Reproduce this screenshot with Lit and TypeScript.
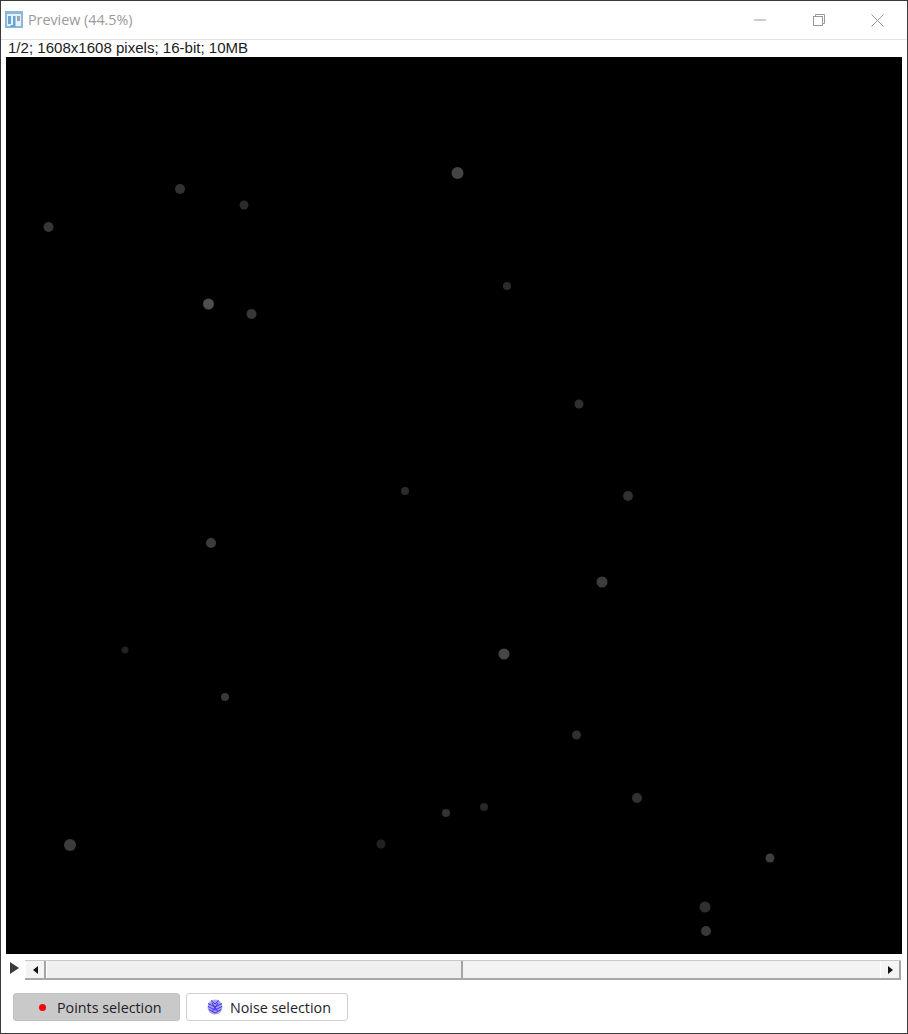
import { LitElement, html, css, svg } from "lit";
import { customElement } from "lit/decorators.js";

const DOTS: [number, number, number, string][] = [
  [457.5, 173, 6, "#444444"], [180, 189, 5, "#323232"], [244, 205, 4.5, "#2b2b2b"],
  [48.5, 227, 5, "#363636"], [507, 286, 4, "#2b2b2b"], [208.5, 304, 5.5, "#4e4e4e"],
  [251.5, 314, 5, "#383838"], [579, 404, 4.5, "#2f2f2f"], [405, 491, 4, "#2b2b2b"],
  [628, 496, 5, "#313131"], [211, 543, 5, "#3c3c3c"], [602, 582, 5.5, "#3c3c3c"],
  [125, 650, 3.5, "#222222"], [504, 654, 5.5, "#464646"], [225, 697, 4, "#383838"],
  [576.5, 735, 4.5, "#2f2f2f"], [637, 798, 5, "#313131"], [484, 807, 4, "#282828"],
  [446, 813, 4, "#333333"], [381, 844, 4.5, "#222222"], [70, 845, 6, "#3c3c3c"],
  [770, 858, 4.5, "#3e3e3e"], [705, 907, 5.5, "#2f2f2f"], [706, 931, 5, "#383838"],
];

@customElement("app-root")
export class AppRoot extends LitElement {
  static styles = css`
    :host {
      display: block;
      width: 908px;
      height: 1034px;
      box-sizing: border-box;
      background: #fff;
      border: 1px solid #3a3a3a;
      overflow: hidden;
      font-family: "Open Sans", "Noto Sans", sans-serif;
    }
    .titlebar {
      height: 38px;
      display: flex;
      align-items: center;
      border-bottom: 1px solid #e2e2e2;
      padding-left: 4px;
    }
    .app-icon { width: 18px; height: 18px; flex: none; }
    .title {
      margin: 0 0 2px 5px;
      font-size: 14.3px;
      color: #9a9a9a;
      flex: 1;
    }
    .win-btn {
      width: 59px;
      height: 38px;
      display: flex;
      align-items: center;
      justify-content: center;
      flex: none;
    }
    .win-btn svg { display: block; }
    .status {
      height: 17px;
      padding-left: 7px;
      font: 15.06px/15px "Liberation Sans", Arial, sans-serif;
      color: #1c1c1c;
      white-space: nowrap;
    }
    .canvas-wrap {
      margin-left: 5px;
      width: 896px;
      height: 897px;
      background: #000;
    }
    .canvas-wrap svg { display: block; }
    .scroll-row {
      margin-top: 6px;
      display: flex;
      align-items: flex-start;
      height: 21px;
    }
    .play {
      width: 24px;
      flex: none;
      display: flex;
      padding: 2px 0 0 9px;
      box-sizing: border-box;
    }
    .track {
      width: 876px;
      height: 20px;
      box-sizing: border-box;
      background: #f3f3f3;
      border-top: 1px solid #c8c8c8;
      border-bottom: 2px solid #a8a8a8;
      display: flex;
      flex: none;
    }
    .arrow {
      width: 21px;
      box-sizing: border-box;
      background: #f4f4f4;
      border-right: 2px solid #a4a4a4;
      border-left: 1px solid #fff;
      display: flex;
      align-items: center;
      justify-content: center;
      flex: none;
    }
    .thumb {
      width: 417px;
      box-sizing: border-box;
      background: #efefef;
      border-left: 1px solid #fff;
      border-right: 2px solid #a4a4a4;
      flex: none;
    }
    .rest { flex: 1; }
    .buttons {
      margin: 12px 0 0 12px;
      display: flex;
      gap: 6px;
    }
    .btn {
      height: 28px;
      box-sizing: border-box;
      border: 1px solid #cfcfcf;
      border-radius: 3px;
      background: #fff;
      display: flex;
      align-items: center;
      font-size: 14.3px;
      color: #1e1e2a;
      white-space: nowrap;
    }
    .btn.on { background: #c9c9c9; border-color: #c2c2c2; width: 167px; padding-left: 25px; }
    .btn.off { width: 162px; padding-left: 20px; }
    .red {
      width: 7px;
      height: 7px;
      border-radius: 50%;
      background: #f5060c;
      margin-right: 11px;
      flex: none;
    }
    .noise { margin-right: 7px; flex: none; display: block; }
  `;

  render() {
    return html`
      <div class="titlebar">
        <svg class="app-icon" viewBox="0 0 18 18">
          <rect x="0" y="0" width="18" height="17" fill="#8db8de"></rect>
          <rect x="2" y="3" width="14" height="12" fill="#e8f1f8"></rect>
          <rect x="3" y="5" width="3" height="8" fill="#6ba3d3"></rect>
          <rect x="8" y="5" width="2.5" height="9" fill="#6ba3d3"></rect>
          <rect x="5.5" y="14" width="5" height="2" fill="#6ba3d3"></rect>
          <rect x="12" y="5" width="3" height="5" fill="#9aa8b2"></rect>
        </svg>
        <div class="title">Preview (44.5%)</div>
        <div class="win-btn">
          <svg width="12" height="2" viewBox="0 0 12 2"><rect width="12" height="1" y="0.5" fill="#999"></rect></svg>
        </div>
        <div class="win-btn">
          <svg width="12" height="12" viewBox="0 0 12 12" fill="none" stroke="#999">
            <rect x="0.5" y="2.5" width="9" height="9"></rect>
            <path d="M2.5 2.5V0.5H11.5V9.5H9.5"></path>
          </svg>
        </div>
        <div class="win-btn">
          <svg width="13" height="13" viewBox="0 0 13 13" stroke="#999" stroke-width="1">
            <path d="M0.5 0.5L12.5 12.5M12.5 0.5L0.5 12.5"></path>
          </svg>
        </div>
      </div>
      <div class="status">1/2; 1608x1608 pixels; 16-bit; 10MB</div>
      <div class="canvas-wrap">
        <svg width="896" height="897" viewBox="6 57 896 897">
          ${DOTS.map(([x, y, r, c]) => svg`<circle cx=${x} cy=${y} r=${r} fill=${c}></circle>`)}
        </svg>
      </div>
      <div class="scroll-row">
        <div class="play">
          <svg width="9" height="12" viewBox="0 0 9 12"><path d="M0 0L9 6L0 12Z" fill="#3a3a3a"></path></svg>
        </div>
        <div class="track">
          <div class="arrow">
            <svg width="5" height="8" viewBox="0 0 5 8"><path d="M5 0L0 4L5 8Z" fill="#111"></path></svg>
          </div>
          <div class="thumb"></div>
          <div class="rest"></div>
          <div class="arrow">
            <svg width="5" height="8" viewBox="0 0 5 8"><path d="M0 0L5 4L0 8Z" fill="#111"></path></svg>
          </div>
        </div>
      </div>
      <div class="buttons">
        <div class="btn on"><span class="red"></span>Points selection</div>
        <div class="btn off">
          <svg class="noise" width="16" height="16" viewBox="0 0 16 16">
            <circle cx="8" cy="8" r="7.5" fill="#a9a3f8"></circle>
            <path d="M1 4.5L8 8L15 4.5M1 7.5L8 11L15 7.5M2 10.5L8 14L14 10.5M4 1.5L8 5L12 1.5M5 4L11 13M11 4L5 13" fill="none" stroke="#3f30e6" stroke-width="1"></path>
          </svg>
          Noise selection
        </div>
      </div>
    `;
  }
}
